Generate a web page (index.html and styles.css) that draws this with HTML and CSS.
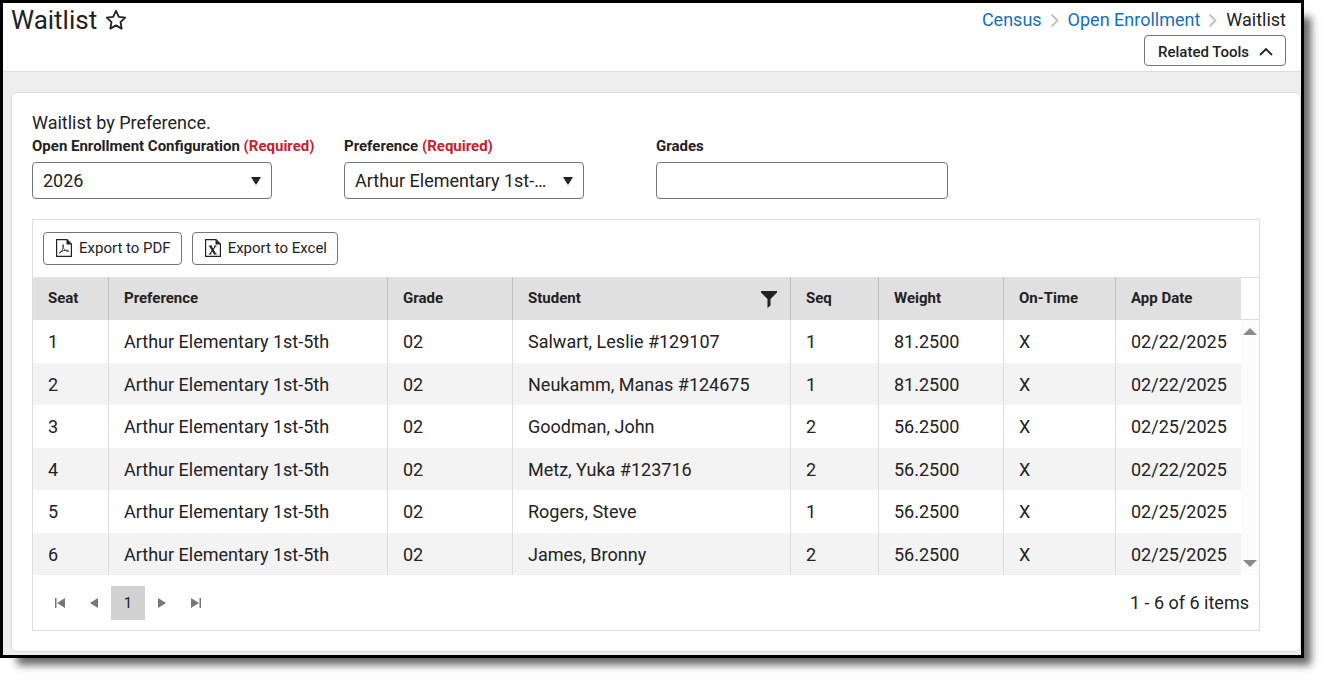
FILE: index.html
```html
<!DOCTYPE html>
<html lang="en">
<head>
    <meta charset="UTF-8">
    <meta name="viewport" content="width=device-width, initial-scale=1.0">
    <title>Waitlist</title>
    <link rel="stylesheet" href="styles.css">
</head>
<body>
    <div class="window">
        <header class="page-header">
            <div class="title">
                <h1>Waitlist</h1>
                <button type="button" class="favorite" aria-label="Add to favorites">
                    <svg width="22" height="22" viewBox="0 0 22 22" fill="none" stroke="currentColor" stroke-width="1.8" stroke-linejoin="round">
                        <path d="M11 1.8l2.8 6 6.4.8-4.7 4.5 1.2 6.5-5.7-3.2-5.7 3.2 1.2-6.5L1.800 8.600l6.400-.8z"/>
                    </svg>
                </button>
            </div>
            <div class="header-right">
                <nav class="breadcrumb" aria-label="Breadcrumb">
                    <a href="#">Census</a>
                    <svg width="10" height="16" viewBox="0 0 10 16" fill="none" stroke="#c4c4c4" stroke-width="2"><path d="M1.500 2.500L7.500 8.500l-6 6"/></svg>
                    <a href="#">Open Enrollment</a>
                    <svg width="10" height="16" viewBox="0 0 10 16" fill="none" stroke="#c4c4c4" stroke-width="2"><path d="M1.500 2.500L7.500 8.500l-6 6"/></svg>
                    <span>Waitlist</span>
                </nav>
                <button type="button" class="related">
                    Related Tools
                    <svg width="14" height="10" viewBox="0 0 14 10" fill="none" stroke="currentColor" stroke-width="1.8"><path d="M1 8l6-6 6 6"/></svg>
                </button>
            </div>
        </header>

        <main class="card">
            <p class="intro">Waitlist by Preference.</p>
            <form class="filters">
                <div class="field">
                    <label for="config">Open Enrollment Configuration <span class="required">(Required)</span></label>
                    <div class="select-wrap">
                        <select id="config">
                            <option>2026</option>
                        </select>
                        <svg class="arrow" width="12" height="8" viewBox="0 0 12 8" fill="currentColor"><path d="M1 0h10L6 8z"/></svg>
                    </div>
                </div>
                <div class="field">
                    <label for="preference">Preference <span class="required">(Required)</span></label>
                    <div class="select-wrap">
                        <select id="preference">
                            <option>Arthur Elementary 1st-5th</option>
                        </select>
                        <svg class="arrow" width="12" height="8" viewBox="0 0 12 8" fill="currentColor"><path d="M1 0h10L6 8z"/></svg>
                    </div>
                </div>
                <div class="field">
                    <label for="grades">Grades</label>
                    <input type="text" id="grades" class="grades">
                </div>
            </form>

            <section class="grid">
                <div class="toolbar">
                    <button type="button" class="export">
                        <svg width="16" height="18" viewBox="0 0 16 18" fill="none" stroke="currentColor" stroke-width="1.2">
                            <path d="M.6.6h10.400l4.400 4.400v12.400H.6z"/>
                            <path d="M10.500.6v5h5z" fill="currentColor" stroke="none"/>
                            <path d="M7 5.500c-.8 0-.2 2.500.8 4s2.700 3 4.200 3c1.300 0 .8-1.300-1-1.300-2.500 0-5.500 1-7 2-1.300 1.100-.3 1.500.8.200 1.400-1.800 2.700-5 2.700-7 0-.6-.2-.9-.5-.9z" stroke-width="0.800"/>
                        </svg>
                        Export to PDF
                    </button>
                    <button type="button" class="export">
                        <svg width="16" height="18" viewBox="0 0 16 18" fill="none" stroke="currentColor" stroke-width="1.2">
                            <path d="M.6.6h10.400l4.400 4.400v12.400H.6z"/>
                            <path d="M10.500.6v5h5z" fill="currentColor" stroke="none"/>
                            <path d="M5.300 7l4.700 8" stroke-width="2.200"/>
                            <path d="M10.500 7L5 15M3.800 7h3M9 7h2.500M3.800 15h2.500M8.800 15h3"/>
                        </svg>
                        Export to Excel
                    </button>
                </div>
                <div class="grid-content">
                    <table>
                        <colgroup>
                            <col class="col-seat">
                            <col class="col-preference">
                            <col class="col-grade">
                            <col class="col-student">
                            <col class="col-seq">
                            <col class="col-weight">
                            <col class="col-ontime">
                            <col class="col-date">
                        </colgroup>
                        <thead>
                            <tr>
                                <th>Seat</th>
                                <th>Preference</th>
                                <th>Grade</th>
                                <th>
                                    <div class="filterable">
                                        Student
                                        <button type="button" class="filter" aria-label="Filter students">
                                            <svg width="16" height="17" viewBox="0 0 16 17" fill="currentColor"><path d="M0 0h16v1.500L9.500 8v6.500L6.500 17V8L0 1.500z"/></svg>
                                        </button>
                                    </div>
                                </th>
                                <th>Seq</th>
                                <th>Weight</th>
                                <th>On-Time</th>
                                <th>App Date</th>
                            </tr>
                        </thead>
                        <tbody>
                            <tr><td>1</td><td>Arthur Elementary 1st-5th</td><td>02</td><td>Salwart, Leslie #129107</td><td>1</td><td>81.2500</td><td>X</td><td>02/22/2025</td></tr>
                            <tr><td>2</td><td>Arthur Elementary 1st-5th</td><td>02</td><td>Neukamm, Manas #124675</td><td>1</td><td>81.2500</td><td>X</td><td>02/22/2025</td></tr>
                            <tr><td>3</td><td>Arthur Elementary 1st-5th</td><td>02</td><td>Goodman, John</td><td>2</td><td>56.2500</td><td>X</td><td>02/25/2025</td></tr>
                            <tr><td>4</td><td>Arthur Elementary 1st-5th</td><td>02</td><td>Metz, Yuka #123716</td><td>2</td><td>56.2500</td><td>X</td><td>02/22/2025</td></tr>
                            <tr><td>5</td><td>Arthur Elementary 1st-5th</td><td>02</td><td>Rogers, Steve</td><td>1</td><td>56.2500</td><td>X</td><td>02/25/2025</td></tr>
                            <tr><td>6</td><td>Arthur Elementary 1st-5th</td><td>02</td><td>James, Bronny</td><td>2</td><td>56.2500</td><td>X</td><td>02/25/2025</td></tr>
                        </tbody>
                    </table>
                    <div class="scroll">
                        <div class="scroll-head"></div>
                        <div class="scroll-track">
                            <svg width="14" height="7" viewBox="0 0 14 7" fill="#8a8a8a"><path d="M7 0l7 7H0z"/></svg>
                            <svg width="14" height="7" viewBox="0 0 14 7" fill="#8a8a8a"><path d="M0 0h14L7 7z"/></svg>
                        </div>
                    </div>
                </div>
                <div class="pager">
                    <div class="pages">
                        <button type="button" aria-label="First page"><svg width="10" height="10" viewBox="0 0 10 10" fill="currentColor"><path d="M0 0h1.500v10H0zM10 0v10L2 5z"/></svg></button>
                        <button type="button" aria-label="Previous page"><svg width="8" height="10" viewBox="0 0 8 10" fill="currentColor"><path d="M8 0v10L0 5z"/></svg></button>
                        <button type="button" class="current">1</button>
                        <button type="button" aria-label="Next page"><svg width="8" height="10" viewBox="0 0 8 10" fill="currentColor"><path d="M0 0l8 5-8 5z"/></svg></button>
                        <button type="button" aria-label="Last page"><svg width="10" height="10" viewBox="0 0 10 10" fill="currentColor"><path d="M8.500 0H10v10H8.500zM0 0l8 5-8 5z"/></svg></button>
                    </div>
                    <span>1 - 6 of 6 items</span>
                </div>
            </section>
        </main>
    </div>
</body>
</html>
```
FILE: styles.css
```css
* {
    box-sizing: border-box;
}

body {
    margin: 0;
    min-height: 100vh;
    padding-right: 25px;
    background: #fff;
    color: #222;
    font-family: Roboto, Arial, sans-serif;
    font-size: 18px;
    line-height: 22px;
}

button,
select,
input {
    font-family: inherit;
    color: inherit;
}

button {
    padding: 0;
    border: none;
    background: none;
    cursor: pointer;
}

svg {
    display: block;
    flex: none;
}

.window {
    border: 3px solid #000;
    background: #eee;
    box-shadow: 12px 12px 8px -5px rgba(0, 0, 0, 0.6);
    padding-bottom: 3px;
}

/* Header */
.page-header {
    display: flex;
    justify-content: space-between;
    padding: 0 15px 5px 8px;
    border-bottom: 1px solid #ddd;
    background: #fff;
}

.title {
    display: flex;
    align-items: center;
    gap: 8px;
    height: 34px;
}

h1 {
    margin: 0;
    font-size: 26px;
    line-height: 34px;
    font-weight: 400;
}

.header-right {
    display: flex;
    flex-direction: column;
    align-items: flex-end;
    gap: 4px;
    padding-top: 6px;
}

.breadcrumb {
    display: flex;
    align-items: center;
    gap: 8px;
}

.breadcrumb a {
    color: #1670b8;
    text-decoration: none;
}

.related {
    display: flex;
    align-items: center;
    gap: 10px;
    height: 31px;
    padding: 2px 12px 0 13px;
    border: 1px solid #757575;
    border-radius: 4px;
    background: #fff;
    font-size: 15px;
    font-weight: 500;
}

/* Card */
.card {
    margin: 20px 0 0 8px;
    padding: 19px 20px 20px;
    border: 1px solid #ddd;
    border-radius: 5px;
    background: #fff;
}

.intro {
    margin: 0;
}

.filters {
    display: flex;
    gap: 20px;
}

.field {
    flex: 0 0 292px;
}

.field label {
    display: block;
    margin-bottom: 4px;
    font-size: 15px;
    font-weight: 700;
    line-height: 24px;
    white-space: nowrap;
}

.required {
    color: #c9202d;
}

.select-wrap {
    display: grid;
    width: 240px;
    align-items: center;
}

.select-wrap > * {
    grid-area: 1 / 1;
}

.select-wrap select,
.grades {
    width: 100%;
    height: 37px;
    margin: 0;
    padding: 0 10px;
    border: 1px solid #757575;
    border-radius: 4px;
    background: #fff;
    font-size: 18px;
}

.select-wrap select {
    appearance: none;
    padding-right: 34px;
    text-overflow: ellipsis;
}

.arrow {
    justify-self: end;
    margin-right: 10px;
    pointer-events: none;
}

.grades {
    display: block;
}

/* Grid */
.grid {
    margin: 20px 20px 0 0;
    border: 1px solid #ddd;
}

.toolbar {
    display: flex;
    gap: 10px;
    padding: 12px 10px;
}

.export {
    display: flex;
    align-items: center;
    gap: 7px;
    height: 33px;
    padding: 0 10px 1px 12px;
    border: 1px solid #757575;
    border-radius: 4px;
    font-size: 15px;
}

.grid-content {
    display: flex;
}

table {
    flex: 1;
    width: 100%;
    table-layout: fixed;
    border-collapse: separate;
    border-spacing: 0;
}

.col-seat { width: 76px; }
.col-preference { width: 279px; }
.col-grade { width: 125px; }
.col-student { width: 278px; }
.col-seq { width: 88px; }
.col-weight { width: 125px; }
.col-ontime { width: 112px; }
.col-date { width: 125px; }

th,
td {
    height: 43px;
    padding: 0 15px;
    border-right: 1px solid #ddd;
    text-align: left;
    white-space: nowrap;
}

th {
    padding: 0 13px 1px 15px;
    border-color: #bfbfbf;
    background: #e0e0e0;
    font-size: 15px;
    font-weight: 700;
}

th:last-child,
td:last-child {
    border-right: none;
}

tbody tr:nth-child(even) td {
    height: 42px;
    padding-top: 1px;
    background: #f3f3f3;
}

.filterable {
    display: flex;
    align-items: center;
    justify-content: space-between;
}

.filter {
    padding-top: 2px;
}

.scroll {
    display: flex;
    flex-direction: column;
    flex: 0 0 18px;
}

.scroll-head {
    height: 43px;
    border-top: 1px solid #ddd;
    border-bottom: 1px solid #ddd;
}

.scroll-track {
    display: flex;
    flex: 1;
    flex-direction: column;
    align-items: center;
    justify-content: space-between;
    padding: 8px 0;
    background: #fcfcfc;
}

.pager {
    display: flex;
    align-items: center;
    justify-content: space-between;
    padding: 11px 10px 10px;
}

.pages {
    display: flex;
}

.pages button {
    display: flex;
    align-items: center;
    justify-content: center;
    width: 34px;
    height: 34px;
    color: #777;
    font-size: 15px;
}

.pages .current {
    background: #d2d2d2;
    color: #222;
}
```
